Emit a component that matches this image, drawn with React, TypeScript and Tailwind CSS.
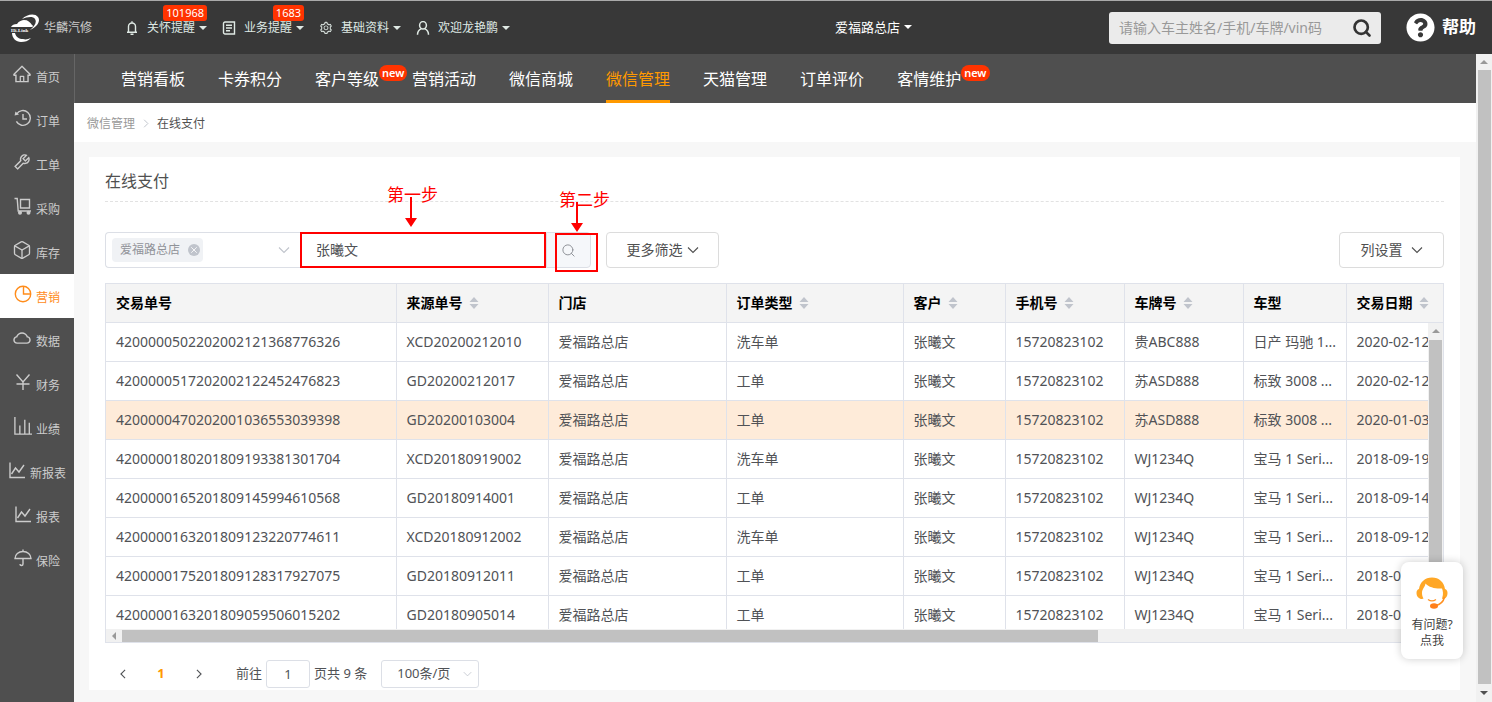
import React from "react";
import { AiOutlineCloud, AiOutlineHome, AiOutlineSetting, AiOutlineTool } from "react-icons/ai";
import { FaQuestionCircle } from "react-icons/fa";
import { Box, Search, X } from "lucide-react";

interface IconProps {
  className?: string;
}

const strokeProps = {
  viewBox: "0 0 18 18",
  fill: "none",
  stroke: "currentColor",
  strokeWidth: 1.4,
  "aria-hidden": true,
};

const HistoryIcon = ({ className }: IconProps) => (
  <svg {...strokeProps} className={className}>
    <path d="M2.6 5.2A7.4 7.4 0 1 1 2.4 12.4" />
    <path d="M9 5v5h4" />
    <path d="M.6 6.6 1.4 2.6 5 5.4z" fill="currentColor" stroke="none" />
  </svg>
);

const TrolleyIcon = ({ className }: IconProps) => (
  <svg {...strokeProps} className={className}>
    <path d="M.5 1.5h2.7l1 12.5H17M6.500 2.500h9v8.500h-9z" />
    <circle cx="6" cy="15.700" r="1.300" fill="currentColor" />
    <circle cx="14.500" cy="15.700" r="1.300" fill="currentColor" />
  </svg>
);

const PieIcon = ({ className }: IconProps) => (
  <svg {...strokeProps} className={className}>
    <circle cx="9" cy="9" r="7.700" />
    <path d="M9.500 1.300v7.700h7.200" />
  </svg>
);

const YuanIcon = ({ className }: IconProps) => (
  <svg {...strokeProps} className={className}>
    <path d="M2.500 1.500 9 9l6.500-7.500M9 9v8M2.500 11h13" />
  </svg>
);

const BarsIcon = ({ className }: IconProps) => (
  <svg viewBox="0 0 20 20" fill="none" stroke="currentColor" strokeWidth="1.500" className={className} aria-hidden>
    <path d="M1 0v19h19M6.500 19V9.500M12 19V3M17 19V6.500" />
  </svg>
);

const TrendIcon = ({ className }: IconProps) => (
  <svg {...strokeProps} className={className}>
    <path d="M2 1.500v15h15M3.500 13l4-6 3.500 4 5-7" />
  </svg>
);

const UmbrellaIcon = ({ className }: IconProps) => (
  <svg {...strokeProps} className={className}>
    <path d="M1 9.500C1 5.500 4.500 2.500 9 2.500s8 3 8 7zM9 .5v2M9 9.500v5.500c0 2-3 2-3 0" />
  </svg>
);

const BellIcon = ({ className }: IconProps) => (
  <svg viewBox="0 0 14 14" fill="none" stroke="currentColor" strokeWidth="1.400" className={className} aria-hidden>
    <path d="M3.500 11V5.500a3.500 3.500 0 0 1 7 0V11M2 11.200h10M7 .3v1.700M5.500 13.200h3" />
  </svg>
);

const BookIcon = ({ className }: IconProps) => (
  <svg viewBox="0 0 14 14" fill="none" stroke="currentColor" strokeWidth="1.400" className={className} aria-hidden>
    <path d="M4 1h8.500v12H3a1.500 1.500 0 0 1-1.500-1.500V2.500A1.500 1.500 0 0 1 3 1zM4 4.200h6M4 7h6M4 9.800h4" />
  </svg>
);

const PersonIcon = ({ className }: IconProps) => (
  <svg viewBox="0 0 14 14" fill="none" stroke="currentColor" strokeWidth="1.500" className={className} aria-hidden>
    <ellipse cx="7" cy="4.300" rx="3.400" ry="3.700" />
    <path d="M1.500 13.800c0-3 1.500-5 3.700-5.900M12.500 13.800c0-3-1.500-5-3.700-5.900" />
  </svg>
);

const Caret = () => (
  <svg viewBox="0 0 8 4" className="w-2 h-1 shrink-0" fill="currentColor" aria-hidden>
    <path d="M0 0h8L4 4z" />
  </svg>
);

const DownIcon = ({ className }: IconProps) => (
  <svg viewBox="0 0 12 8" fill="none" stroke="currentColor" strokeWidth="1.100" className={className} aria-hidden>
    <path d="M1 1.500l5 5 5-5" />
  </svg>
);

const RightIcon = ({ className }: IconProps) => (
  <svg viewBox="0 0 8 12" fill="none" stroke="currentColor" strokeWidth="1.300" className={className} aria-hidden>
    <path d="M1.500 1l5 5-5 5" />
  </svg>
);

const SortIcon = () => (
  <svg viewBox="0 0 10 12" className="w-[10px] h-3 shrink-0" fill="#c0c4cc" aria-hidden>
    <path d="M5 0l4.500 5h-9zM5 12l4.500-5h-9z" />
  </svg>
);

const Logo = () => (
  <svg viewBox="0 0 30 28" className="w-[30px] h-7 shrink-0" fill="#fff" aria-hidden>
    <path d="M12 5C17 0 25-1 28 3c3 4-1 10-8 13 5-4 7-8 5-11-2-3-8-2-13 0z" />
    <path d="M1 13c1-2 3-3 6-3 2-3 5-4 7-4 4 0 6 2 8 5 1 .4 1 1 .5 2H1z" />
    <path d="M2 19c0 5 4 9 9 9 4 0 7-1 10-4-3 1-5 2-8 1-4 0-7-2-8-6z" />
    <text x="1" y="18" fontSize="5" fontWeight="700" fontFamily="Liberation Serif, serif">
      Hi-Link
    </text>
  </svg>
);

const HeadsetIcon = () => (
  <svg viewBox="0 0 32 32" className="w-8 h-8" aria-hidden>
    <path
      d="M6 22C3 22 .5 19.500 .5 16c0-2 .8-3.500 2.500-4C4 5 9 .5 16 .5S28 5 29 12c1.700.5 2.500 2 2.500 4 0 3.500-2 6-4.500 6-1 0-1-.5-.7-1.500C27.500 17 27 14 26 11.500 20 12 13 10.500 9.500 6.500 9 10 6 12 6 16c0 2 .5 4 1.500 5.500z"
      fill="#ffa726"
    />
    <path d="M28.500 20c-1 4.500-4 7.500-9 8.500" fill="none" stroke="#ff9020" strokeWidth="1.500" />
    <path d="M12 22.500c2.500 1.800 5.500 1.800 8 0" fill="none" stroke="#ff9326" strokeWidth="1.300" />
    <ellipse cx="18" cy="29" rx="4" ry="2.800" fill="#ff7f1a" />
  </svg>
);

const topMenu = [
  { title: "关怀提醒", icon: BellIcon, badge: "101968" },
  { title: "业务提醒", icon: BookIcon, badge: "1683" },
  { title: "基础资料", icon: AiOutlineSetting },
  { title: "欢迎龙艳鹏", icon: PersonIcon },
];

const sideMenu = [
  { title: "首页", icon: AiOutlineHome },
  { title: "订单", icon: HistoryIcon },
  { title: "工单", icon: AiOutlineTool },
  { title: "采购", icon: TrolleyIcon },
  { title: "库存", icon: Box },
  { title: "营销", icon: PieIcon, active: true },
  { title: "数据", icon: AiOutlineCloud },
  { title: "财务", icon: YuanIcon },
  { title: "业绩", icon: BarsIcon },
  { title: "新报表", icon: TrendIcon },
  { title: "报表", icon: TrendIcon },
  { title: "保险", icon: UmbrellaIcon },
];

const tabs = [
  { title: "营销看板" },
  { title: "卡券积分" },
  { title: "客户等级", isNew: true },
  { title: "营销活动" },
  { title: "微信商城" },
  { title: "微信管理", active: true },
  { title: "天猫管理" },
  { title: "订单评价" },
  { title: "客情维护", isNew: true },
];

const columns = [
  { title: "交易单号", width: "w-[290px]" },
  { title: "来源单号", width: "w-[152px]", sortable: true },
  { title: "门店", width: "w-[178px]" },
  { title: "订单类型", width: "w-[177px]", sortable: true },
  { title: "客户", width: "w-[102px]", sortable: true },
  { title: "手机号", width: "w-[119px]", sortable: true },
  { title: "车牌号", width: "w-[119px]", sortable: true },
  { title: "车型", width: "w-[103px]" },
  { title: "交易日期", width: "w-auto", sortable: true },
];

const shop = "爱福路总店";
const customer = "张曦文";
const phone = "15720823102";

const rows = [
  ["4200000502202002121368776326", "XCD20200212010", shop, "洗车单", customer, phone, "贵ABC888", "日产 玛驰 1...", "2020-02-12"],
  ["4200000517202002122452476823", "GD20200212017", shop, "工单", customer, phone, "苏ASD888", "标致 3008 ...", "2020-02-12"],
  ["4200000470202001036553039398", "GD20200103004", shop, "工单", customer, phone, "苏ASD888", "标致 3008 ...", "2020-01-03"],
  ["4200000180201809193381301704", "XCD20180919002", shop, "洗车单", customer, phone, "WJ1234Q", "宝马 1 Seri...", "2018-09-19"],
  ["4200000165201809145994610568", "GD20180914001", shop, "工单", customer, phone, "WJ1234Q", "宝马 1 Seri...", "2018-09-14"],
  ["4200000163201809123220774611", "XCD20180912002", shop, "洗车单", customer, phone, "WJ1234Q", "宝马 1 Seri...", "2018-09-12"],
  ["4200000175201809128317927075", "GD20180912011", shop, "工单", customer, phone, "WJ1234Q", "宝马 1 Seri...", "2018-0"],
  ["4200000163201809059506015202", "GD20180905014", shop, "工单", customer, phone, "WJ1234Q", "宝马 1 Seri...", "2018-0"],
];

const highlightedRow = 2;

const Header = () => (
  <header className="h-[54px] shrink-0 flex items-center bg-[#383838] border-t border-[#aaa] text-xs text-[#dfe9e4]">
    <div className="w-[125px] shrink-0 flex items-center gap-1 pl-[10px] text-[#ccc]">
      <Logo />
      <span>华麟汽修</span>
    </div>
    <nav className="flex flex-1 items-center gap-[15px]">
      {topMenu.map(({ title, icon: Icon, badge }) => (
        <button key={title} className="relative flex items-center gap-1 whitespace-nowrap">
          <Icon className="w-[14px] h-[14px] mr-1 shrink-0" />
          <span className="leading-3">{title}</span>
          <Caret />
          {badge && (
            <span className="absolute right-0 -top-4 h-4 px-[3px] rounded-[3px] bg-[#ff3300] text-[11px] leading-4 text-white">
              {badge}
            </span>
          )}
        </button>
      ))}
    </nav>
    <button className="flex items-center gap-1 text-[13px] text-white whitespace-nowrap">
      爱福路总店
      <Caret />
    </button>
    <div className="w-[580px] flex items-center justify-end pr-4">
      <div className="w-[272px] h-8 flex items-center rounded-[3px] bg-[#ebebeb] pl-[10px] pr-[9px]">
        <input
          aria-label="搜索"
          placeholder="请输入车主姓名/手机/车牌/vin码"
          className="flex-1 min-w-0 bg-transparent text-sm text-gray-700 placeholder:text-[#999] outline-none"
        />
        <button aria-label="搜索">
          <Search className="w-5 h-5 text-[#333]" strokeWidth={3.2} />
        </button>
      </div>
      <a href="#help" className="ml-[25px] flex items-center gap-[7px] text-[17px] font-bold text-white whitespace-nowrap">
        <FaQuestionCircle className="w-[29px] h-[29px]" />
        帮助
      </a>
    </div>
  </header>
);

const Sidebar = () => (
  <aside className="w-[74px] shrink-0 bg-[#4f4f4f] text-xs">
    {sideMenu.map(({ title, icon: Icon, active }) => (
      <a
        key={title}
        href={`#${title}`}
        className={`h-11 flex items-center justify-center gap-1 whitespace-nowrap ${
          active ? "bg-white text-[#ff8c1a]" : "text-[#ccc]"
        }`}
      >
        <Icon
          className={`mb-1 shrink-0 ${
            Icon === AiOutlineHome || Icon === AiOutlineTool || Icon === AiOutlineCloud || Icon === Box
              ? "w-5 h-5 -ml-[2px]"
              : "w-[18px] h-[18px]"
          }`}
          strokeWidth={Icon === Box ? 1.6 : undefined}
        />
        <span className="pt-1">{title}</span>
      </a>
    ))}
  </aside>
);

const TabBar = () => (
  <nav className="h-[49px] shrink-0 flex gap-[33px] pl-[46px] bg-[#4f4f4f] border-l border-[#666] text-base">
    {tabs.map((tab) => (
      <a
        key={tab.title}
        href={`#${tab.title}`}
        className={`relative flex items-center border-b-[3px] pt-1 whitespace-nowrap ${
          tab.active ? "border-[#ff9900] text-[#ff9900]" : "border-transparent text-white"
        }`}
      >
        {tab.title}
        {tab.isNew && (
          <span className="absolute left-full top-[11px] h-4 px-[3px] rounded-full bg-[#ff3300] text-[11px] leading-[15px] font-semibold text-white">
            new
          </span>
        )}
      </a>
    ))}
  </nav>
);

interface StepProps {
  label: string;
  className: string;
  arrowClassName: string;
}

const Step = ({ label, className, arrowClassName }: StepProps) => (
  <div className={`absolute flex flex-col items-center text-[17px] leading-5 text-[#ff0000] whitespace-nowrap ${className}`}>
    {label}
    <svg viewBox="0 0 12 30" className={`w-3 h-[30px] ${arrowClassName}`} fill="currentColor" aria-hidden>
      <path d="M5 0h2v21h5l-6 9-6-9h5z" />
    </svg>
  </div>
);

const Filters = () => (
  <div className="flex items-stretch h-9 text-sm text-[#606266]">
    <div className="w-[195px] flex items-center justify-between rounded-l border border-r-0 border-[#dcdfe6] pl-1.5 pr-[10px]">
      <span className="h-6 flex items-center gap-2 rounded bg-[#f0f2f5] pl-2 pr-[3px] text-xs text-[#909399]">
        爱福路总店
        <button aria-label="移除" className="w-3 h-3 rounded-full bg-[#c0c4cc] text-white flex items-center justify-center">
          <X className="w-[10px] h-[10px]" />
        </button>
      </span>
      <button aria-label="选择门店">
        <DownIcon className="w-3 h-2 text-[#c0c4cc]" />
      </button>
    </div>
    <div className="relative w-[246px]">
      <input
        aria-label="客户"
        defaultValue="张曦文"
        className="w-full h-full border-2 border-[#ff0000] px-[14px] pb-[3px] text-sm text-[#505256] outline-none"
      />
      <Step label="第一步" className="left-[87px] -top-[47px]" arrowClassName="-mt-2 -ml-1" />
    </div>
    <div className="relative w-[45px]">
      <button
        aria-label="查询"
        className="w-full h-full flex items-center justify-center rounded-r border border-[#dcdfe6] bg-[#f5f7fa]"
      >
        <Search className="w-[15px] h-[15px] text-[#909399]" strokeWidth={1.6} />
      </button>
      <span className="absolute left-[9px] top-[1px] w-[43px] h-[39px] border-2 border-[#ff0000] pointer-events-none" />
      <Step label="第二步" className="left-[13px] -top-[42px]" arrowClassName="-mt-2 -ml-4" />
    </div>
    <button className="ml-[15px] w-[113px] flex items-center justify-center gap-1 rounded border border-[#dcdcdc] text-[#505050]">
      更多筛选
      <DownIcon className="w-3 h-2" />
    </button>
    <button className="ml-auto w-[105px] flex items-center justify-center gap-2 rounded border border-[#dcdcdc] text-[#505050]">
      列设置
      <DownIcon className="w-3 h-2" />
    </button>
  </div>
);

const PaymentTable = () => (
  <div className="mt-[15px] border border-[#dfe2ea]">
    <div className="relative h-[345px] overflow-hidden">
      <table className="w-full table-fixed border-collapse text-sm text-[#505256]">
        <thead>
          <tr className="h-[38px] bg-[#f4f4f4] text-black">
            {columns.map((column) => (
              <th
                key={column.title}
                className={`${column.width} border-r border-b border-[#dfe2ea] last:border-r-0 px-[10px] text-left font-bold`}
              >
                <span className="flex items-center gap-[6px] whitespace-nowrap">
                  {column.title}
                  {column.sortable && <SortIcon />}
                </span>
              </th>
            ))}
          </tr>
        </thead>
        <tbody>
          {rows.map((row, index) => (
            <tr key={row[0]} className={`h-[39px] ${index === highlightedRow ? "bg-[#feebd9]" : "bg-white"}`}>
              {row.map((cell, i) => (
                <td
                  key={i}
                  className="border-r border-b border-[#dfe2ea] last:border-r-0 pl-[10px] whitespace-nowrap overflow-hidden"
                >
                  {cell}
                </td>
              ))}
            </tr>
          ))}
        </tbody>
      </table>
      {/* vertical scrollbar, below the fixed header */}
      <div className="absolute right-0 top-[39px] bottom-0 w-[15px] bg-[#f1f1f1] flex flex-col items-center">
        <span className="h-[17px] flex items-center rotate-180 text-[#999]">
          <Caret />
        </span>
        <span className="w-[13px] h-[230px] bg-[#c1c1c1]" />
      </div>
    </div>
    <div className="h-[13px] flex items-center bg-[#f1f1f1]">
      <span className="w-4 flex justify-center rotate-90 text-[#999]">
        <Caret />
      </span>
      <span className="w-[73%] h-3 bg-[#c1c1c1]" />
    </div>
  </div>
);

const Pagination = () => (
  <div className="mt-[17px] h-7 flex items-center text-[13px] text-[#505256]">
    <button aria-label="上一页" className="w-9 flex justify-center">
      <RightIcon className="w-2 h-[10px] rotate-180" />
    </button>
    <button className="w-10 text-center font-bold text-[#ff9900]">1</button>
    <button aria-label="下一页" className="w-9 flex justify-center">
      <RightIcon className="w-2 h-[10px]" />
    </button>
    <label className="ml-[19px] flex items-center gap-1 whitespace-nowrap">
      前往
      <input defaultValue="1" className="w-11 h-7 rounded-[3px] border border-[#dcdfe6] text-center outline-none" />
      页共 9 条
    </label>
    <div className="relative ml-[14px]">
      <select
        aria-label="每页条数"
        className="w-[98px] h-7 appearance-none rounded-[3px] border border-[#dcdfe6] bg-white pl-[15px] outline-none"
      >
        <option>100条/页</option>
      </select>
      <DownIcon className="absolute right-[7px] top-[11px] w-[9px] h-1.5 text-[#c0c4cc] pointer-events-none" />
    </div>
  </div>
);

const PageScrollbar = () => (
  <div className="w-4 shrink-0 flex flex-col items-center bg-[#f1f1f1]">
    <span className="h-4 flex items-center rotate-180 text-[#999]">
      <Caret />
    </span>
    <span className="w-[13px] flex-1 bg-[#c1c1c1]" />
    <span className="h-[18px] flex items-center text-[#505050]">
      <Caret />
    </span>
  </div>
);

const App = () => {
  return (
    <div className="relative h-screen flex flex-col overflow-hidden font-['Noto_Sans','Noto_Sans_CJK_SC',sans-serif]">
      <Header />
      <div className="flex flex-1 min-h-0">
        <Sidebar />
        <main className="flex-1 min-w-0 flex flex-col bg-[#f7f7f7]">
          <TabBar />
          <div className="h-[39px] shrink-0 flex items-center gap-2 bg-white pl-[13px] pt-0.5 text-xs text-[#999]">
            <a href="#wechat">微信管理</a>
            <RightIcon className="w-1.5 h-[9px] text-[#c0c4cc]" />
            <span className="text-[#505050]">在线支付</span>
          </div>
          <section className="mt-[15px] ml-[15px] mr-4 bg-white px-4 pb-[2px]">
            <h1 className="h-[45px] pt-3 mb-[30px] border-b border-dashed border-[#e2e2e2] text-[16px] leading-6 text-[#505050]">
              在线支付
            </h1>
            <Filters />
            <PaymentTable />
            <Pagination />
          </section>
        </main>
        <PageScrollbar />
      </div>
      <button className="absolute right-[29px] bottom-[43px] w-[62px] h-[97px] flex flex-col items-center rounded-lg bg-white pt-[15px] text-xs leading-4 text-[#404040] shadow-[0_0_8px_rgba(0,0,0,0.2)]">
        <HeadsetIcon />
        <span className="mt-2">有问题?</span>
        <span>点我</span>
      </button>
    </div>
  );
};

export default App;
